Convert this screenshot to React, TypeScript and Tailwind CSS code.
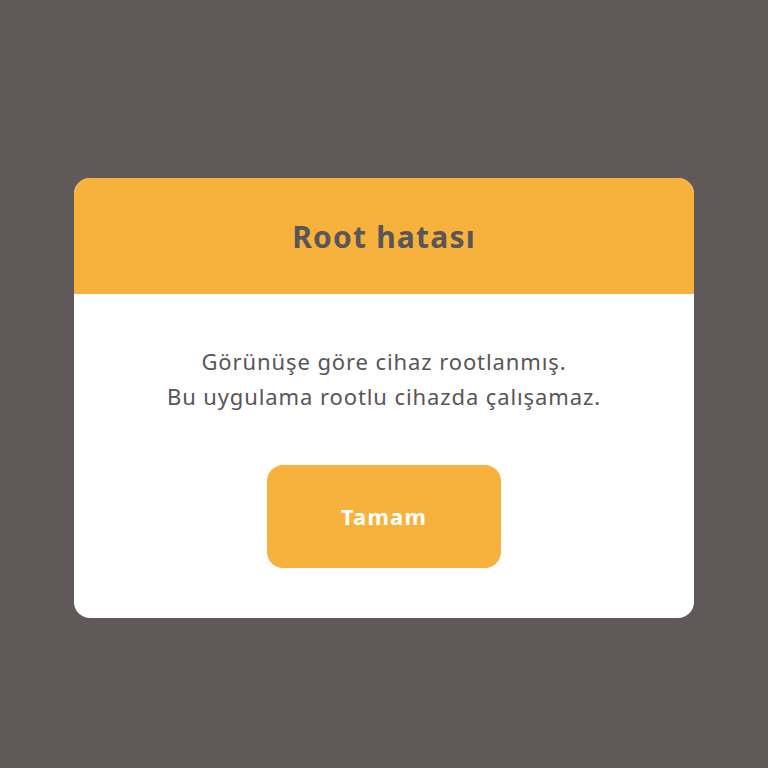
export default function App() {
  return (
    <div className="w-[768px] h-[768px] bg-[#5f5a59] flex justify-center pt-[178px] font-['Noto_Sans',sans-serif]">
      <div className="w-[620px] h-[440px] bg-white rounded-[16px] overflow-hidden flex flex-col">
        <div className="h-[116px] bg-[#f7b23e] flex items-center justify-center">
          <h1 className="text-[30px] font-bold text-[#5a5557] tracking-[1.2px]">Root hatası</h1>
        </div>
        <div className="flex-1 flex flex-col items-center pt-[50px]">
          <p className="text-[22px] leading-[35px] text-[#5a5557] text-center tracking-[0.9px]">
            Görünüşe göre cihaz rootlanmış.
            <br />
            Bu uygulama rootlu cihazda çalışamaz.
          </p>
          <button className="mt-[51px] w-[234px] h-[103px] rounded-[16px] bg-[#f7b23e] text-white text-[22px] font-bold tracking-[1.2px]">
            Tamam
          </button>
        </div>
      </div>
    </div>
  );
}
